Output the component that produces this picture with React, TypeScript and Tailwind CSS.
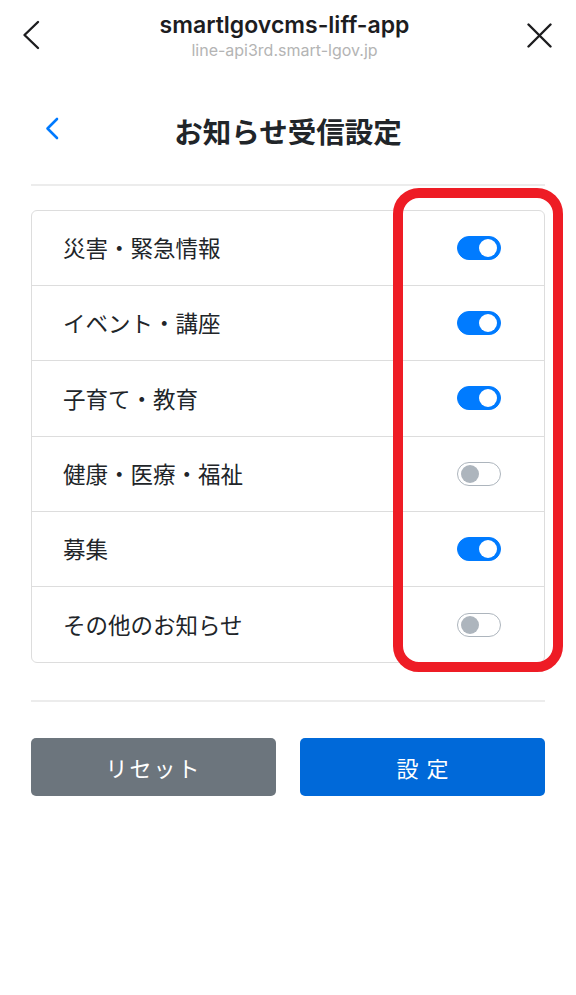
type Item = {
  label: string
  on: boolean
}

const items: Item[] = [
  { label: "災害・緊急情報", on: true },
  { label: "イベント・講座", on: true },
  { label: "子育て・教育", on: true },
  { label: "健康・医療・福祉", on: false },
  { label: "募集", on: true },
  { label: "その他のお知らせ", on: false },
]

const jp = { fontFamily: '"Noto Sans CJK JP", "Noto Sans", sans-serif' }
const latin = { fontFamily: 'Inter, "Noto Sans", sans-serif' }

function Toggle({ on }: { on: boolean }) {
  return (
    <span
      className={
        on
          ? "relative flex h-[24px] w-[44px] items-center rounded-full border border-[#007bff] bg-[#007bff]"
          : "relative flex h-[24px] w-[44px] items-center rounded-full border border-[#adb5bd] bg-white"
      }
    >
      <span
        className={
          on
            ? "absolute right-[3px] h-[18px] w-[18px] rounded-full bg-white"
            : "absolute left-[3px] h-[18px] w-[18px] rounded-full bg-[#adb5bd]"
        }
      />
    </span>
  )
}

function IconBack() {
  return (
    <svg width="20" height="30" viewBox="0 0 20 30" fill="none">
      <path
        d="M16 2L2.5 15L16 28"
        stroke="#1d1d1f"
        strokeWidth="2.4"
        strokeLinecap="round"
        strokeLinejoin="round"
      />
    </svg>
  )
}

function IconClose() {
  return (
    <svg width="25" height="25" viewBox="0 0 25 25" fill="none">
      <path
        d="M1.5 1.5L23.5 23.5M23.5 1.5L1.5 23.5"
        stroke="#1d1d1f"
        strokeWidth="2.4"
        strokeLinecap="round"
      />
    </svg>
  )
}

function IconBackBlue() {
  return (
    <svg width="14" height="23" viewBox="0 0 14 23" fill="none">
      <path
        d="M12 2L2.5 11.5L12 21"
        stroke="#007aff"
        strokeWidth="2.6"
        strokeLinecap="round"
        strokeLinejoin="round"
      />
    </svg>
  )
}

export default function App() {
  return (
    <div className="relative min-h-[995px] w-[576px] bg-white" style={jp}>
      <header className="flex h-[78px] items-start justify-between pl-[22px] pr-[24px]">
        <div className="pt-[20px]">
          <IconBack />
        </div>
        <div className="flex flex-col items-center pt-[10px]">
          <div
            className="text-[23px] font-semibold leading-[30px] text-[#1d1d1f]"
            style={latin}
          >
            smartlgovcms-liff-app
          </div>
          <div
            className="text-[16px] leading-[20px] text-[#b4b4b4]"
            style={latin}
          >
            line-api3rd.smart-lgov.jp
          </div>
        </div>
        <div className="pt-[23px]">
          <IconClose />
        </div>
      </header>

      <main className="px-[31px]">
        <div className="relative flex h-[106px] items-center justify-center">
          <span className="absolute left-[14px] top-[39px]">
            <IconBackBlue />
          </span>
          <h1 className="text-[28.5px] font-bold leading-[36px] text-[#212529]">
            お知らせ受信設定
          </h1>
        </div>
        <hr className="border-t-2 border-[#ececec]" />

        <ul className="mt-[24px] overflow-hidden rounded-[6px] border border-[#dddddd]">
          {items.map((item, index) => (
            <li
              key={index}
              className="flex h-[75.2px] items-center justify-between border-b border-[#dddddd] pl-[31px] pr-[43px] last:border-b-0"
            >
              <span className="text-[22.5px] text-[#212529]">{item.label}</span>
              <Toggle on={item.on} />
            </li>
          ))}
        </ul>

        <hr className="mt-[37px] border-t-2 border-[#ececec]" />

        <div className="mt-[36px] grid grid-cols-2 gap-[24px]">
          <button className="flex h-[58px] items-center justify-center rounded-[5px] bg-[#6c757d] text-[22px] tracking-[2px] text-white">
            リセット
          </button>
          <button className="flex h-[58px] items-center justify-center rounded-[5px] bg-[#0069d9] pl-[8px] text-[22px] tracking-[8px] text-white">
            設定
          </button>
        </div>
      </main>

      <div className="pointer-events-none absolute left-[393px] top-[188px] h-[484px] w-[170px] rounded-[26px] border-[10px] border-[#ee1c25]" />
    </div>
  )
}
